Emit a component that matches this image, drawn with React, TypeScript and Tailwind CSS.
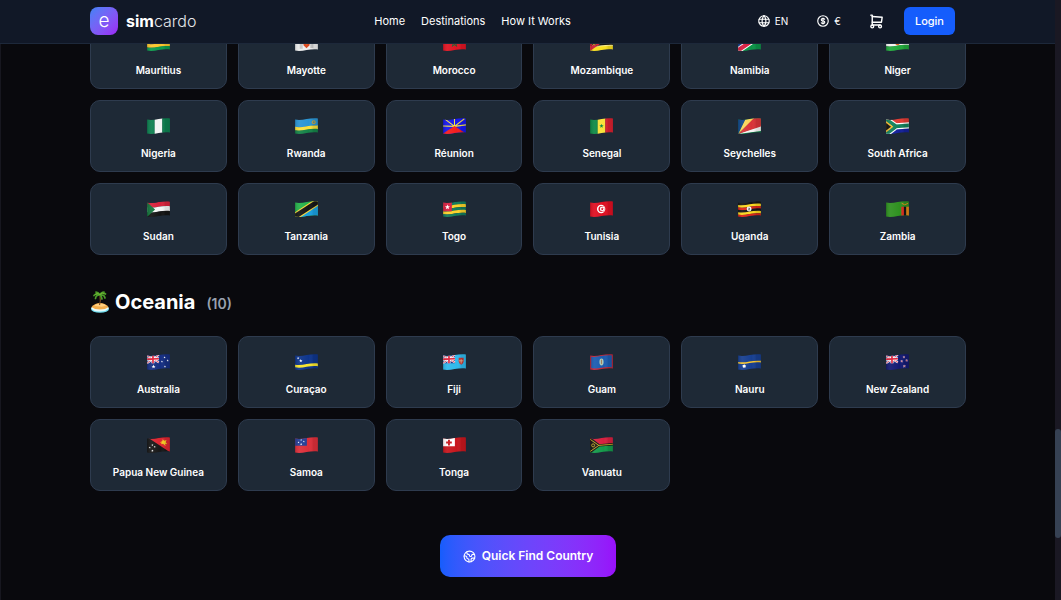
import type { ReactNode } from "react";
import { TbCoin, TbShoppingCart, TbWorld } from "react-icons/tb";
import { Earth } from "lucide-react";

type Country = { code: string; name: string };

const africa: Country[] = [
  { code: "mu", name: "Mauritius" },
  { code: "yt", name: "Mayotte" },
  { code: "ma", name: "Morocco" },
  { code: "mz", name: "Mozambique" },
  { code: "na", name: "Namibia" },
  { code: "ne", name: "Niger" },
  { code: "ng", name: "Nigeria" },
  { code: "rw", name: "Rwanda" },
  { code: "re", name: "Réunion" },
  { code: "sn", name: "Senegal" },
  { code: "sc", name: "Seychelles" },
  { code: "za", name: "South Africa" },
  { code: "sd", name: "Sudan" },
  { code: "tz", name: "Tanzania" },
  { code: "tg", name: "Togo" },
  { code: "tn", name: "Tunisia" },
  { code: "ug", name: "Uganda" },
  { code: "zm", name: "Zambia" },
];

const oceania: Country[] = [
  { code: "au", name: "Australia" },
  { code: "cw", name: "Curaçao" },
  { code: "fj", name: "Fiji" },
  { code: "gu", name: "Guam" },
  { code: "nr", name: "Nauru" },
  { code: "nz", name: "New Zealand" },
  { code: "pg", name: "Papua New Guinea" },
  { code: "ws", name: "Samoa" },
  { code: "to", name: "Tonga" },
  { code: "vu", name: "Vanuatu" },
];

// one waving horizontal band, y and h measured on the left edge
function Band({ y, h, fill }: { y: number; h: number; fill: string }) {
  return <path fill={fill} d={`M0 ${y}C20 ${y + 4} 38 ${y - 6} 60 ${y - 3}V${y - 3 + h}C38 ${y - 6 + h} 20 ${y + 4 + h} 0 ${y + h}Z`} />;
}

function Bands({ colors }: { colors: string[] }) {
  const h = 38 / colors.length;
  return (
    <>
      {colors.map((c, i) => (
        <Band key={i} y={4 + i * h} h={h + 0.3} fill={c} />
      ))}
    </>
  );
}

function Columns({ colors }: { colors: string[] }) {
  const w = 60 / colors.length;
  return (
    <>
      {colors.map((c, i) => (
        <rect key={i} x={i * w} width={w + 0.3} height="42" fill={c} />
      ))}
    </>
  );
}

function Star({ x, y, r, fill }: { x: number; y: number; r: number; fill: string }) {
  return (
    <path
      transform={`translate(${x} ${y}) scale(${r})`}
      fill={fill}
      d="M0-1 .25-.32.95-.31.39.12.59.81 0 .4-.59.81-.39.12-.95-.31-.25-.32Z"
    />
  );
}

function UnionJack() {
  return (
    <g>
      <path fill="#1c2f86" d="M0 0h31v24H0z" />
      <path stroke="#fff" strokeWidth="5" d="M0 4l31 18M0 24L31 2" />
      <path stroke="#e0203a" strokeWidth="2" d="M0 4l31 18M0 24L31 2" />
      <path stroke="#fff" strokeWidth="8" d="M15.5 0v24M0 13.5l31-1" />
      <path stroke="#e0203a" strokeWidth="4.5" d="M15.5 0v24M0 13.5l31-1" />
    </g>
  );
}

const flags: Record<string, ReactNode> = {
  mu: <Bands colors={["#e0263a", "#1c2f8f", "#fbc62b", "#0b9a4c"]} />,
  yt: (
    <>
      <rect width="60" height="42" fill="#eeeeee" />
      <path fill="#c4c4c4" d="M12 8h8v28h-8zM40 8h8v26h-8z" />
      <path fill="#2b61b3" d="M22 7h16v11H22z" />
      <path fill="#d9481f" d="M22 18h16v9l-8 8-8-8z" />
      <path fill="#f3c331" d="M29 19h3v5h-3z" />
    </>
  ),
  ma: (
    <>
      <rect width="60" height="42" fill="#e01422" />
      <path fill="none" stroke="#0e6b35" strokeWidth="2" d="M30 11l6 19-16-12h20L24 30z" />
    </>
  ),
  mz: (
    <>
      <Bands colors={["#078a50", "#111", "#f8df1c"]} />
      <path stroke="#fff" strokeWidth="1.5" d="M0 17l60-4M0 30l60-3" />
      <path fill="#cf1f37" d="M0 3l27 20L0 42z" />
      <Star x={10} y={22} r={8} fill="#f5dc25" />
      <path stroke="#111" strokeWidth="2" d="M4 27l13-10M5 17l11 11" />
    </>
  ),
  na: (
    <>
      <rect width="60" height="42" fill="#0c9347" />
      <path fill="#12368c" d="M0 0h52L0 34z" />
      <path stroke="#fff" strokeWidth="16" d="M-4 43L64-3" />
      <path stroke="#d81c3f" strokeWidth="11" d="M-4 43L64-3" />
      <circle cx="13" cy="12" r="6" fill="#fbce2e" />
    </>
  ),
  ne: (
    <>
      <Bands colors={["#e3651d", "#f4f4f1", "#20a83b"]} />
      <circle cx="30" cy="21" r="6" fill="#e3651d" />
    </>
  ),
  ng: <Columns colors={["#0d8050", "#f3f5f4", "#0d8050"]} />,
  rw: (
    <>
      <Band y={0} h={24} fill="#2a95d4" />
      <Band y={23} h={10} fill="#fae03c" />
      <Band y={32} h={14} fill="#158348" />
      <circle cx="49" cy="11" r="5" fill="#c9a63b" />
      <circle cx="49" cy="11" r="2.4" fill="#4f8aa0" />
    </>
  ),
  re: (
    <>
      <rect width="60" height="42" fill="#1717ee" />
      <path stroke="#f6e441" strokeWidth="2.8" d="M30 22V0M30 22L5 3M30 22L56 2M30 22L0 21M30 22l30-4" />
      <path fill="#f51d1d" d="M30 21l30 20v2H0v-2z" />
    </>
  ),
  sn: (
    <>
      <Columns colors={["#0f8a46", "#f9e23a", "#d9202f"]} />
      <Star x={30} y={21} r={6} fill="#0f8a46" />
    </>
  ),
  sc: (
    <>
      <rect width="60" height="42" fill="#0a8244" />
      <path fill="#f5f5f5" d="M0 42L60 20v14z" />
      <path fill="#d93238" d="M0 42L40 0h20v22z" />
      <path fill="#fbd45a" d="M0 42L20 0h22z" />
      <path fill="#12458a" d="M0 0h21L0 42z" />
    </>
  ),
  za: (
    <>
      <Band y={0} h={20} fill="#e23b33" />
      <Band y={24} h={22} fill="#14219b" />
      <path fill="none" stroke="#fff" strokeWidth="16" d="M-4 1l30 21 38-3M-4 45l30-23" />
      <path fill="none" stroke="#12805a" strokeWidth="10" d="M-4 1l30 21 38-3M-4 45l30-23" />
      <path fill="#f8b92f" d="M0 8l19 15L0 38z" />
      <path fill="#111" d="M0 13l13 10L0 33z" />
    </>
  ),
  sd: (
    <>
      <Bands colors={["#d8213b", "#f5f5f5", "#141414"]} />
      <path fill="#14743c" d="M0 3l21 19L0 42z" />
    </>
  ),
  tz: (
    <>
      <rect width="60" height="42" fill="#26b24b" />
      <path fill="#1a9fe0" d="M60 0v42H0z" />
      <path stroke="#f9d43c" strokeWidth="19" d="M-4 43L64-1" />
      <path stroke="#151515" strokeWidth="13" d="M-4 43L64-1" />
    </>
  ),
  tg: (
    <>
      <Bands colors={["#127a5b", "#fbd229", "#127a5b", "#fbd229", "#127a5b"]} />
      <path fill="#d71f42" d="M0 0h23v27H0z" />
      <Star x={11.5} y={16} r={7} fill="#fff" />
    </>
  ),
  tn: (
    <>
      <rect width="60" height="42" fill="#e00f22" />
      <circle cx="29" cy="21" r="11" fill="#fff" />
      <circle cx="30" cy="21" r="8" fill="#e00f22" />
      <circle cx="32" cy="21" r="6.3" fill="#fff" />
      <Star x={32} y={21} r={4.5} fill="#e00f22" />
    </>
  ),
  ug: (
    <>
      <Bands colors={["#161616", "#fbd81e", "#dd2417", "#161616", "#fbd81e", "#dd2417"]} />
      <circle cx="29" cy="21" r="6.5" fill="#f1f1f1" />
      <path fill="#555" d="M28 17l3 2-1 6-3-1z" />
    </>
  ),
  zm: (
    <>
      <rect width="60" height="42" fill="#2f9120" />
      <path fill="#dc2a1e" d="M40 15h7v27h-7z" />
      <path fill="#151515" d="M47 15h6v27h-6z" />
      <path fill="#ee8418" d="M53 15h7v27h-7z" />
      <path stroke="#e78d1c" strokeWidth="2.5" fill="none" d="M41 6l8 4 9-4" />
    </>
  ),
  au: (
    <>
      <rect width="60" height="42" fill="#162f83" />
      <UnionJack />
      <Star x={17} y={33} r={5.5} fill="#fff" />
      <Star x={46} y={9} r={3} fill="#fff" />
      <Star x={54} y={17} r={3} fill="#fff" />
      <Star x={39} y={20} r={3} fill="#fff" />
      <Star x={47} y={33} r={3.4} fill="#fff" />
    </>
  ),
  cw: (
    <>
      <rect width="60" height="42" fill="#0e358c" />
      <Band y={28} h={7} fill="#f9e52c" />
      <Star x={8} y={11} r={3.4} fill="#fff" />
      <Star x={15} y={18} r={4.8} fill="#fff" />
    </>
  ),
  fj: (
    <>
      <rect width="60" height="42" fill="#2fb9ec" />
      <UnionJack />
      <path fill="#c93432" d="M41 10h13v10q-1 6-6.5 8-5.5-2-6.5-8z" />
      <path fill="#e6c7a0" d="M46.5 14h2v11h-2zM42 17h11v2H42z" />
    </>
  ),
  gu: (
    <>
      <rect width="60" height="42" fill="#c0283c" />
      <path fill="#1b5cb0" d="M3 7C20 10 38 1 57 4v31C38 32 20 41 3 37z" />
      <ellipse cx="30" cy="21" rx="5.5" ry="9" fill="#a9c7b7" />
      <path stroke="#a1643d" strokeWidth="2" d="M30 15v11" />
    </>
  ),
  nr: (
    <>
      <rect width="60" height="42" fill="#173f91" />
      <Band y={21} h={4} fill="#f9c62c" />
      <Star x={16} y={32} r={6} fill="#fff" />
      <circle cx="16" cy="32" r="3.5" fill="#fff" />
    </>
  ),
  nz: (
    <>
      <rect width="60" height="42" fill="#141a73" />
      <UnionJack />
      <g stroke="#fff" strokeWidth=".3">
        <Star x={47} y={8} r={3} fill="#e0203a" />
        <Star x={54} y={17} r={3} fill="#e0203a" />
        <Star x={41} y={19} r={3} fill="#e0203a" />
        <Star x={48} y={32} r={3.4} fill="#e0203a" />
      </g>
    </>
  ),
  pg: (
    <>
      <rect width="60" height="42" fill="#171717" />
      <path fill="#dd2531" d="M0 0h60v40z" />
      <path fill="#f7cf23" d="M33 14l7-3 1-5 4 4 6-2-2 6 4 5-6-1 2 6-7-6-6 1 3-4z" />
      <Star x={14} y={21} r={3} fill="#fff" />
      <Star x={7} y={28} r={3} fill="#fff" />
      <Star x={20} y={26} r={3} fill="#fff" />
      <Star x={14} y={36} r={3.5} fill="#fff" />
    </>
  ),
  ws: (
    <>
      <rect width="60" height="42" fill="#de2f3a" />
      <path fill="#263e96" d="M0 0h31v23H0z" />
      <Star x={16} y={8} r={2.6} fill="#fff" />
      <Star x={9} y={14} r={2.6} fill="#fff" />
      <Star x={23} y={12} r={2.6} fill="#fff" />
      <Star x={16} y={19} r={3} fill="#fff" />
    </>
  ),
  to: (
    <>
      <rect width="60" height="42" fill="#c8161d" />
      <path fill="#fff" d="M0 0h31v24H0z" />
      <path fill="#c8161d" d="M13 7h5v5h5v5h-5v5h-5v-5H8v-5h5z" />
    </>
  ),
  vu: (
    <>
      <Band y={0} h={22} fill="#d81f3f" />
      <Band y={22} h={24} fill="#149a4a" />
      <path fill="none" stroke="#151515" strokeWidth="6" d="M0 4l24 18 36-3M0 40l24-18" />
      <path fill="#151515" d="M0 6l21 16L0 38z" />
      <path fill="none" stroke="#f4cf27" strokeWidth="2" d="M0 6l23 16 37-3M0 38l23-16" />
      <circle cx="8" cy="22" r="4" fill="none" stroke="#e5c428" strokeWidth="2" />
    </>
  ),
};

function Flag({ code }: { code: string }) {
  return (
    <svg viewBox="0 0 60 42" className="h-4 w-[23px]" aria-hidden="true">
      <defs>
        <clipPath id={`wave-${code}`}>
          <path d="M0 4C20 8 38 -2 60 1V38C38 35 20 45 0 41Z" />
        </clipPath>
        <linearGradient id={`shade-${code}`}>
          <stop offset="0" stopColor="#000" stopOpacity=".12" />
          <stop offset=".2" stopColor="#fff" stopOpacity=".06" />
          <stop offset=".6" stopColor="#fff" stopOpacity="0" />
          <stop offset=".8" stopColor="#000" stopOpacity=".1" />
          <stop offset="1" stopColor="#000" stopOpacity=".12" />
        </linearGradient>
      </defs>
      <g clipPath={`url(#wave-${code})`}>
        {flags[code]}
        <rect width="60" height="42" fill={`url(#shade-${code})`} />
      </g>
    </svg>
  );
}

function CountryGrid({ countries }: { countries: Country[] }) {
  return (
    <div className="grid grid-cols-6 gap-[11px]">
      {countries.map((c) => (
        <a
          key={c.code}
          href={`#${c.code}`}
          className="flex flex-col items-center gap-3 rounded-[10px] border border-[#2e3b4e] bg-[#1e2936] pt-[17px] pb-[11px] text-center"
        >
          <Flag code={c.code} />
          <span className="text-[10px] leading-[14px] font-semibold text-white">{c.name}</span>
        </a>
      ))}
    </div>
  );
}

function Island() {
  return (
    <svg viewBox="0 0 40 44" className="h-[22px] w-5" aria-hidden="true">
      <ellipse cx="20" cy="36" rx="18" ry="7.5" fill="#6fdcee" />
      <path fill="#e6fbfb" d="M2 34q5 8 18 7 13 0 18-7-2-4-18-4T2 34z" />
      <path fill="#f3ad4b" d="M3 32q7-8 17-8t17 8q-6 5-17 5T3 32z" />
      <path fill="#ffd080" d="M8 29q6-4 12-4 8 0 13 4-7 3-13 2-7 0-12-2z" />
      <path stroke="#7b4b22" strokeWidth="2.5" fill="none" d="M19 28q3-9 1-18" />
      <path
        stroke="#4c9c28"
        strokeWidth="3.5"
        fill="none"
        strokeLinecap="round"
        d="M20 8q-7-5-12 1M20 8q-8-1-9 7M20 8q5-7 11-2M20 8q8-2 10 6M20 8q-4-6-8-6M20 8q2-6 8-6M20 8q3 2 4 8"
      />
      <path stroke="#88c93b" strokeWidth="1.3" fill="none" d="M20 7q-6-4-10 0M20 7q5-5 9-1" />
    </svg>
  );
}

function Header() {
  return (
    <header className="fixed top-0 right-1.5 left-0 z-10 border-b border-[#1d283a] bg-[#111827] pl-px">
      <div className="mx-auto flex h-[43px] max-w-[876px] items-center justify-between pr-[11px] pb-px">
        <a href="#home" className="flex items-center gap-2 text-white">
          <span className="flex size-7 items-center justify-center rounded-lg bg-linear-to-br from-[#3b82f6] to-[#9c20f5] text-[19px] leading-7 font-light">
            e
          </span>
          <span className="text-[16px] leading-7 font-light text-gray-200">
            <b className="font-bold text-white">sim</b>cardo
          </span>
        </a>

        <nav className="flex gap-4 text-[11px] leading-4 text-white">
          <a href="#home">Home</a>
          <a href="#destinations">Destinations</a>
          <a href="#how">How It Works</a>
        </nav>

        <div className="flex items-center gap-3 text-white">
          <button className="flex items-center gap-1 px-2 text-[10px] leading-4">
            <TbWorld size={14} /> EN
          </button>
          <button className="flex items-center gap-1 px-2 text-[10px] leading-4">
            <TbCoin size={14} /> €
          </button>
          <button className="p-[7px]" aria-label="Cart">
            <TbShoppingCart size={17} />
          </button>
          <button className="h-7 rounded-md bg-[#155dfc] px-[11px] text-[11px] leading-4 font-medium">Login</button>
        </div>
      </div>
    </header>
  );
}

export default function App() {
  return (
    <div className="flex min-h-screen bg-[#09090d] font-[Inter,sans-serif]">
      <Header />
      <main className="flex-1 border-l border-[#17171f]">
        <div className="mx-auto flex max-w-[876px] flex-col pt-[17px] pb-[22px]">
          <CountryGrid countries={africa} />

          <h2 className="mt-[33px] mb-5 flex items-center text-[20px] leading-7 font-bold text-white">
            <Island />
            <span className="ml-[5px]">Oceania</span>
            <span className="ml-[11px] pt-1 text-[14px] leading-5 font-semibold text-gray-400">(10)</span>
          </h2>
          <CountryGrid countries={oceania} />

          <button className="mt-11 flex h-[42px] items-center gap-[6px] self-center rounded-[10px] bg-linear-to-r from-[#155dfc] to-[#9810fa] px-[23px] text-[12px] leading-5 font-semibold text-white">
            <Earth size={13} strokeWidth={2} /> Quick Find Country
          </button>
        </div>
      </main>

      {/* scroll track */}
      <div className="flex w-1.5 flex-col bg-[#1a1823]">
        <div className="grow-[429]" />
        <div className="grow-[109] rounded-full bg-[#364153]" />
        <div className="grow-[62]" />
      </div>
    </div>
  );
}
